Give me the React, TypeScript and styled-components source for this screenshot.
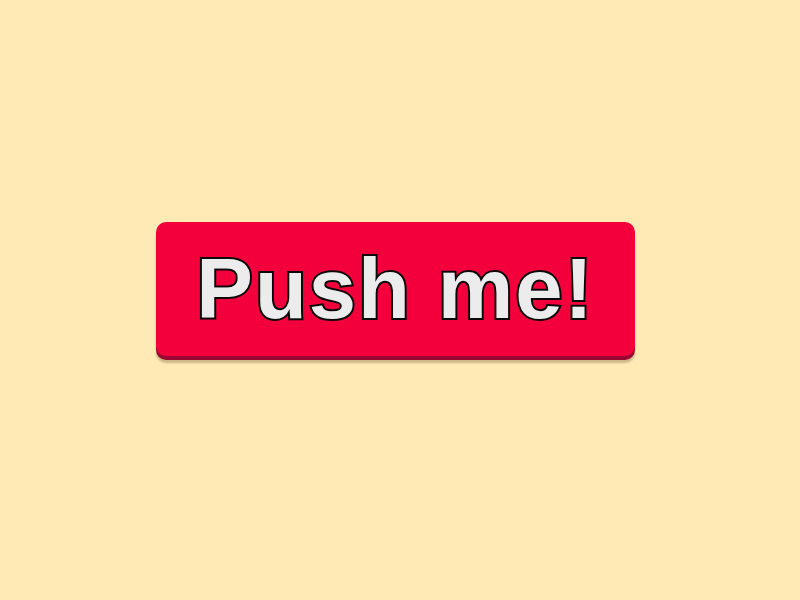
import React from "react";
import styled, { createGlobalStyle } from "styled-components";

const Global = createGlobalStyle`
  html, body { margin: 0; padding: 0; background: #ffe9b5; }
  body { font-family: "Liberation Sans", Arial, sans-serif; }
`;

const Page = styled.div`
  width: 800px;
  height: 600px;
  display: flex;
  align-items: center;
  justify-content: center;
  background: #ffe9b5;
`;

const Button = styled.button`
  margin: 0 9px 22px 0;
  width: 479px;
  height: 134px;
  border: none;
  border-radius: 10px;
  background: #f3003c;
  box-shadow: 0 4px 0 #9a0733, 0 7px 2px rgba(60, 40, 0, 0.25);
  color: #ececec;
  font-family: "Liberation Sans", Arial, sans-serif;
  font-weight: 700;
  font-size: 85px;
  letter-spacing: 2px;
  -webkit-text-stroke: 4px #0a0a0a;
  paint-order: stroke fill;
  cursor: pointer;
  padding: 0;
  display: flex;
  align-items: center;
  justify-content: center;
`;

export default function App() {
  return (
    <>
      <Global />
      <Page>
        <Button>Push me!</Button>
      </Page>
    </>
  );
}
